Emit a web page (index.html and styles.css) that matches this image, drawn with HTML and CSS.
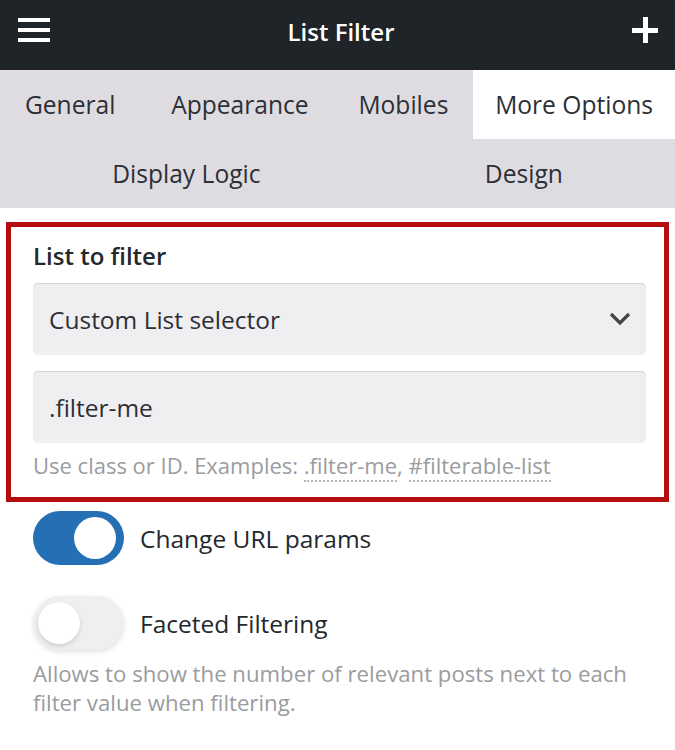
FILE: index.html
```html
<!DOCTYPE html>
<html>
<head>
<meta charset="utf-8">
<link rel="stylesheet" href="styles.css">
</head>
<body>
<div class="app">
  <header class="topbar">
    <div class="hamburger"><span></span><span></span><span></span></div>
    <div class="title">List Filter</div>
    <div class="plus"><span class="h"></span><span class="v"></span></div>
  </header>
  <nav class="tabs">
    <div class="row">
      <div class="tab">General</div>
      <div class="tab">Appearance</div>
      <div class="tab">Mobiles</div>
      <div class="tab active">More Options</div>
    </div>
    <div class="row">
      <div class="tab">Display Logic</div>
      <div class="tab">Design</div>
    </div>
  </nav>
  <main class="content">
    <section class="highlight">
      <div class="label">List to filter</div>
      <div class="field select">
        <span>Custom List selector</span>
        <svg class="chev" width="22" height="14" viewBox="0 0 22 14"><path d="M2 2 L11 11 L20 2" fill="none" stroke="#444" stroke-width="3.2"/></svg>
      </div>
      <div class="field input"><span>.filter-me</span></div>
      <div class="help">Use class or ID. Examples: <span class="code">.filter-me</span>, <span class="code">#filterable-list</span></div>
    </section>
    <div class="toggle-row">
      <div class="switch on"><span class="knob"></span></div>
      <span class="toggle-label">Change URL params</span>
    </div>
    <div class="toggle-row">
      <div class="switch off"><span class="knob"></span></div>
      <span class="toggle-label">Faceted Filtering</span>
    </div>
    <p class="desc">Allows to show the number of relevant posts next to each filter value when filtering.</p>
  </main>
</div>
</body>
</html>
```
FILE: styles.css
```css
* { box-sizing: border-box; }
html, body { margin: 0; padding: 0; background: #fff; }
body { font-family: "Open Sans", "Noto Sans", sans-serif; color: #23282d; }
.app { width: 675px; }

.topbar {
  height: 70px;
  background: #1f2429;
  display: flex;
  align-items: center;
  justify-content: space-between;
  padding: 0 17px 0 18px;
  color: #fff;
}
.hamburger { width: 32px; display: flex; flex-direction: column; gap: 6px; margin-top: -10px; }
.hamburger span { display: block; height: 4px; background: #fff; }
.title { font-size: 24px; font-weight: 600; margin-top: -8px; }
.plus { width: 26px; height: 26px; position: relative; margin-top: -10px; }
.plus .h { position: absolute; left: 0; top: 10.5px; width: 26px; height: 5px; background: #fff; }
.plus .v { position: absolute; top: 0; left: 10.5px; width: 5px; height: 26px; background: #fff; }

.tabs { background: #dedce1; }
.row { display: flex; }
.tab {
  flex: 1 1 auto;
  height: 69px;
  display: flex;
  align-items: center;
  justify-content: center;
  font-size: 24.6px;
  color: #2c3036;
  padding: 0 10px;
}
.row:first-child .tab:first-child { padding-right: 16px; }
.tab.active { background: #fff; flex-grow: 0.8; }

.content { padding: 14px 6px 20px; }
.highlight {
  border: 5px solid #b50d0d;
  padding: 13px 18px 17px 22px;
}
.label { font-size: 24px; font-weight: 600; color: #23282d; line-height: 32px; margin-bottom: 11px; }
.field {
  height: 72px;
  background: #efeef1;
  border-radius: 5px;
  box-shadow: inset 0 1px 1px rgba(0,0,0,0.12);
  display: flex;
  align-items: center;
  justify-content: space-between;
  padding: 0 15px 0 16px;
  font-size: 24.5px;
  color: #2c3036;
}
.field.input { margin-top: 16px; }
.help { font-size: 22px; color: #9a9ca0; margin-top: 7px; line-height: 30px; }
.code { border-bottom: 2px dotted #b5b7bb; }

.toggle-row { display: flex; align-items: center; gap: 16px; margin: 9px 0 0 27px; height: 54px; }
.toggle-row + .toggle-row { margin-top: 31px; }
.switch { width: 91px; height: 54px; border-radius: 27px; position: relative; flex: none; }
.switch.on { background: #2570b4; }
.switch.off { background: #efeef1; box-shadow: 0 2px 5px rgba(0,0,0,0.12); }
.knob { position: absolute; top: 6px; width: 42px; height: 42px; border-radius: 50%; background: #fff; }
.switch.on .knob { right: 8px; }
.switch.off .knob { left: 5px; box-shadow: 0 2px 4px rgba(0,0,0,0.15); }
.toggle-label { font-size: 24.5px; color: #23282d; }
.desc { margin: 9px 0 0 27px; font-size: 22.2px; line-height: 29px; color: #9a9ca0; padding-right: 30px; }
```
